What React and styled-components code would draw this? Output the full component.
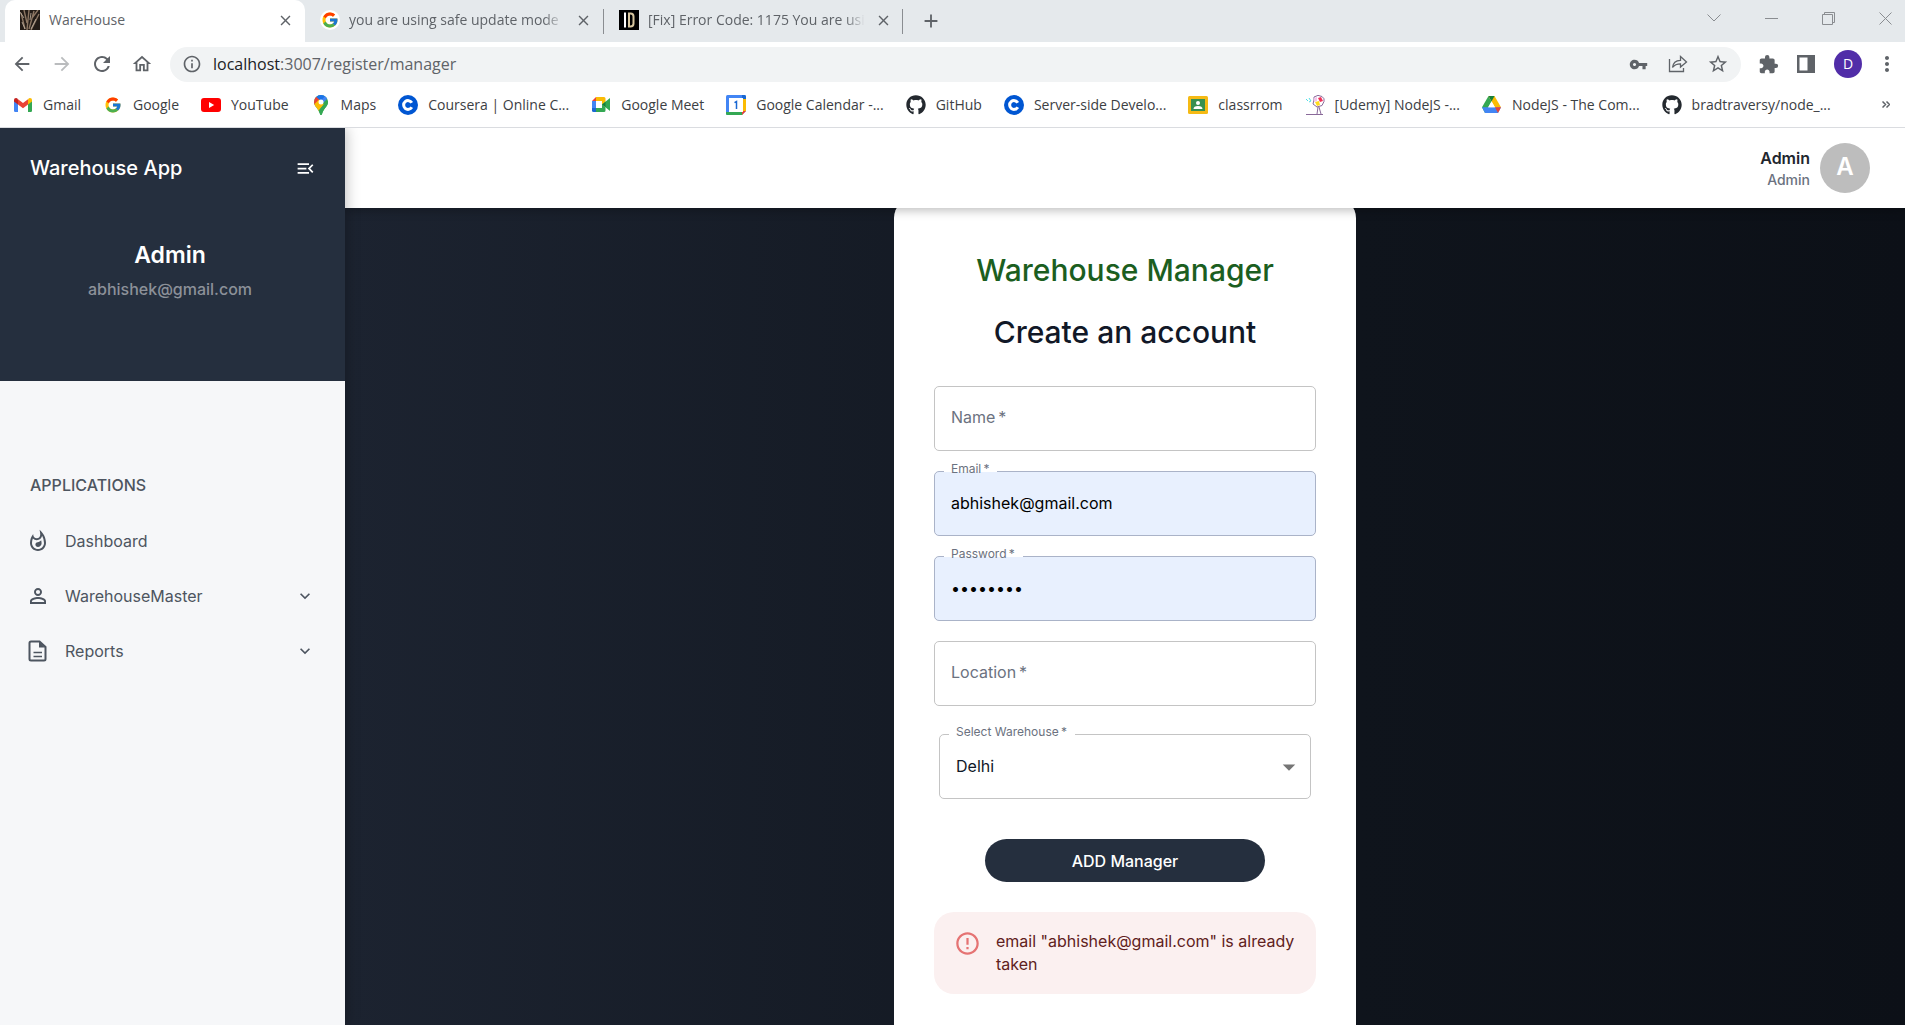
import React, { useState } from "react";
import styled, { createGlobalStyle } from "styled-components";
import {
  MdArrowBack, MdArrowForward, MdRefresh, MdOutlineHome, MdInfoOutline, MdVpnKey, MdStarBorder,
  MdExtension, MdMoreVert, MdClose, MdAdd, MdMenuOpen, MdOutlineWhatshot, MdPersonOutline,
  MdKeyboardArrowDown, MdErrorOutline, MdArrowDropDown,
} from "react-icons/md";
import { FaGithub } from "react-icons/fa";
import { FcGoogle } from "react-icons/fc";

const ui = '"Open Sans", "Noto Sans", sans-serif';
const app = 'Inter, Roboto, sans-serif';
const navy = "#252f3e";

const GlobalStyle = createGlobalStyle`
  *, *::before, *::after { box-sizing: border-box; }
  body { margin: 0; font-family: ${app}; background: #fff; }
  button, input, select { font: inherit; color: inherit; }
  button { border: 0; padding: 0; background: none; cursor: pointer; }
  a { color: inherit; text-decoration: none; }
  svg { display: block; flex: none; }
`;

const Page = styled.div`
  display: flex;
  flex-direction: column;
  height: 100vh;
  overflow: hidden;
`;

/* browser frame */
const TabStrip = styled.div`
  display: flex;
  align-items: stretch;
  height: 42px;
  flex: none;
  padding-left: 5px;
  background: #e5e9ec;
  font: 14px/20px ${ui};
  color: #5f6368;
`;
const Tab = styled.div`
  display: flex;
  align-items: center;
  gap: 9px;
  width: ${(p) => (p.$active ? 300 : 298)}px;
  padding: 0 10px 2px 15px;
  border-radius: 10px 10px 0 0;
  background: ${(p) => (p.$active ? "#fff" : "transparent")};
`;
const TabTitle = styled.span`
  flex: 1 0 0;
  white-space: nowrap;
  mask-image: ${(p) => (p.$fade ? "linear-gradient(to right, #000 calc(100% - 20px), transparent)" : "none")};
`;
const TabDivider = styled.span`
  align-self: center;
  width: 1px;
  height: 25px;
  background: #8a8d91;
`;
const IconButton = styled.button`
  display: flex;
  flex: none;
  align-items: center;
  justify-content: center;
  width: ${(p) => p.$w || 20}px;
  color: ${(p) => p.$color || "#5f6368"};
`;
const Favicon = styled.span`
  display: flex;
  flex: none;
  width: 20px;
  height: 20px;
  border-radius: ${(p) => (p.$round ? "50%" : "0")};
  align-items: center;
  justify-content: center;
  background: ${(p) => p.$bg || "transparent"};
`;
const WindowControls = styled.div`
  display: flex;
  gap: 37px;
  margin-left: auto;
  padding: 0 10px 6px 0;
`;
const Toolbar = styled.div`
  display: flex;
  align-items: center;
  height: 44px;
  flex: none;
  padding: 0 11px 0 12px;
  background: #fff;
`;
const NavButtons = styled.div`
  display: flex;
  gap: 20px;
  margin-right: 18px;
`;
const UrlBar = styled.div`
  display: flex;
  flex: 1;
  align-items: center;
  height: 35px;
  padding: 0 13px 0 12px;
  border-radius: 18px;
  background: #f1f3f4;
  font: 16px/24px ${ui};
  color: #5f6368;
`;
const UrlText = styled.span`
  flex: 1;
  margin-left: 11px;
  b { font-weight: 400; color: #202124; }
`;
const UrlActions = styled.div`
  display: flex;
  gap: 20px;
`;
const ToolActions = styled.div`
  display: flex;
  align-items: center;
  gap: 18px;
  margin-left: 17px;
`;
const Profile = styled.button`
  width: 28px;
  height: 28px;
  border-radius: 50%;
  background: #512da8;
  color: #fff;
  font: 14px/28px ${ui};
`;
const Bookmarks = styled.nav`
  display: flex;
  align-items: center;
  gap: 22px;
  height: 42px;
  flex: none;
  padding: 0 9px 4px 13px;
  border-bottom: 1px solid #dadce0;
  background: #fff;
  font: 14px/20px ${ui};
  color: #3c4043;
  > button { margin-left: auto; }
`;
const Bookmark = styled.a`
  display: flex;
  align-items: center;
  gap: 10px;
  white-space: nowrap;
`;

/* application */
const Shell = styled.div`
  display: flex;
  flex: 1;
  min-height: 0;
  overflow: hidden;
`;
const Sidebar = styled.aside`
  display: flex;
  flex-direction: column;
  width: 345px;
  flex: none;
  z-index: 3;
  background: #f6f7f9;
  box-shadow: 0 0 14px rgba(0, 0, 0, 0.3);
`;
const Brand = styled.div`
  height: 253px;
  background: ${navy};
  color: #fff;
`;
const BrandBar = styled.div`
  display: flex;
  align-items: center;
  justify-content: space-between;
  height: 80px;
  padding: 0 30px;
  font-size: 20px;
  font-weight: 500;
`;
const UserBlock = styled.div`
  padding: 32px 5px 0 0;
  text-align: center;
`;
const UserName = styled.div`
  font-size: 23px;
  line-height: 30px;
  font-weight: 600;
`;
const UserMail = styled.div`
  margin-top: 7px;
  font-size: 16px;
  line-height: 24px;
  font-weight: 500;
  color: #8c9199;
`;
const Menu = styled.nav`
  display: flex;
  flex-direction: column;
  padding: 89px 30px 0 26px;
  color: #4d5560;
`;
const MenuTitle = styled.h2`
  margin: 0 0 13px;
  padding-left: 4px;
  font-size: 16px;
  line-height: 30px;
  font-weight: 500;
`;
const MenuItem = styled.a`
  display: flex;
  align-items: center;
  height: 55px;
  font-size: 16px;
`;
const MenuLabel = styled.span`
  flex: 1;
  margin-left: 15px;
`;
const Content = styled.div`
  display: flex;
  flex-direction: column;
  flex: 1;
  min-width: 0;
`;
const Header = styled.header`
  display: flex;
  align-items: center;
  justify-content: flex-end;
  gap: 10px;
  height: 80px;
  flex: none;
  padding-right: 35px;
  z-index: 2;
  background: #fff;
  box-shadow: 0 2px 10px rgba(0, 0, 0, 0.28);
`;
const HeaderUser = styled.div`
  padding-top: 2px;
  text-align: right;
  font-size: 16px;
  line-height: 22px;
  font-weight: 600;
  color: #22262e;
  small {
    display: block;
    font-size: 14px;
    font-weight: 500;
    color: #6b7280;
  }
`;
const Avatar = styled.span`
  width: 50px;
  height: 50px;
  border-radius: 50%;
  background: #bdbdbd;
  color: #fff;
  font-size: 24px;
  line-height: 48px;
  font-weight: 600;
  text-align: center;
`;
const Main = styled.main`
  display: flex;
  flex: 1;
  min-height: 0;
  justify-content: center;
  background: linear-gradient(to right, #1c2330 0%, #0f141c 65%, #0c1017 100%);
`;
const Card = styled.form`
  display: flex;
  flex-direction: column;
  width: 462px;
  height: max-content;
  min-height: calc(100% + 40px);
  margin-top: -10px;
  padding: 52px 40px 40px;
  border-radius: 20px;
  background: #fff;
`;
const Title = styled.h1`
  margin: 0 0 22px;
  font-size: 30px;
  line-height: 40px;
  font-weight: 500;
  text-align: center;
  color: ${(p) => p.$color};
`;
const Fields = styled.div`
  display: flex;
  flex-direction: column;
  gap: 20px;
  margin-top: 12px;
`;
const FieldBox = styled.div`
  position: relative;
  margin: ${(p) => (p.$inset ? "8px 5px 0" : "0")};
  color: ${(p) => (p.$filled ? "#000" : "#111827")};
  input, select {
    display: block;
    width: 100%;
    height: 65px;
    padding: 0 16px 2px;
    border: 1px solid ${(p) => (p.$filled ? "#aab3c8" : "#c4c4c4")};
    border-radius: 5px;
    outline: 0;
    appearance: none;
    background: ${(p) => (p.$filled ? "#e8f0fe" : "#fff")};
    font-size: 16px;
  }
  svg {
    position: absolute;
    right: 7px;
    top: 18px;
    color: #757575;
    pointer-events: none;
  }
`;
const FieldLabel = styled.label`
  position: absolute;
  pointer-events: none;
  color: #6b7280;
  white-space: nowrap;
  ${(p) =>
    p.$raised
      ? `left: 10px; top: -10px; padding: 0 8px 0 7px; font-size: 12px; line-height: 16px;
         background: linear-gradient(#fff, #fff) 0 10px / 100% 1px no-repeat;`
      : "left: 17px; top: 19px; font-size: 16px; line-height: 24px;"}
`;
const Submit = styled.button`
  align-self: center;
  width: 280px;
  height: 43px;
  margin-top: 40px;
  border-radius: 22px;
  background: ${navy};
  color: #fff;
  font-size: 16px;
  font-weight: 500;
`;
const Alert = styled.div`
  display: flex;
  gap: 15px;
  margin-top: 30px;
  padding: 18px 20px;
  border-radius: 20px;
  background: #fbf0f0;
  color: #5f2120;
  font-size: 16px;
  line-height: 23px;
  svg { color: #e57373; }
`;

const Warehouse = () => (
  <svg width="20" height="20" viewBox="0 0 20 20">
    <rect width="20" height="20" fill="#241c17" />
    <path d="M1 3l4 16M4 0l3 13M9 0L7 20M14 1L9 19M19 4l-8 16M18 0l-6 8" stroke="#8c7663" strokeWidth="1.4" />
    <path d="M2 12l3 7M11 3l-1 7M16 9l-5 10M0 2l4 6" stroke="#c5b6a5" strokeWidth=".8" />
  </svg>
);
const IdLogo = () => (
  <svg width="20" height="20" viewBox="0 0 20 20">
    <rect width="20" height="20" fill="#000" />
    <path d="M6 2.500v15" stroke="#fff" strokeWidth="2" />
    <path d="M10 3.500h1.500q3 0 3 3v7q0 3-3 3H10z" fill="none" stroke="#d8c7a0" strokeWidth="2" />
  </svg>
);
const GmailLogo = () => (
  <svg width="18" height="14" viewBox="0 0 18 14">
    <path d="M0 2v10.800Q0 14 1.200 14H4V5z" fill="#4285f4" />
    <path d="M18 2v10.800q0 1.200-1.200 1.200H14V5z" fill="#34a853" />
    <path d="M14 1.200V6.500l4-3V2q0-2-2-2-1 0-2 1.200z" fill="#fbbc04" />
    <path d="M4 6.500V1.200L9 5l5-3.800v5.300L9 10.300z" fill="#ea4335" />
    <path d="M0 2v1.500l4 3V1.200Q3 0 2 0 0 0 0 2z" fill="#c5221f" />
  </svg>
);
const YoutubeLogo = () => (
  <svg width="20" height="14" viewBox="0 0 20 14">
    <rect width="20" height="14" rx="3" fill="#f00" />
    <path d="M8 4l5.200 3L8 10z" fill="#fff" />
  </svg>
);
const MapsLogo = () => (
  <svg width="14" height="20" viewBox="0 0 14 20">
    <clipPath id="pin"><path d="M7 0a7 7 0 0 1 7 7c0 4.500-4.500 6.500-5.800 11.500Q7.800 20 7 20t-1.200-1.500C4.500 13.500 0 11.500 0 7a7 7 0 0 1 7-7z" /></clipPath>
    <g clipPath="url(#pin)">
      <rect width="14" height="20" fill="#34a853" />
      <path d="M4 0h10v3L8 9z" fill="#4285f4" />
      <path d="M5 -1L1 2l5 5 5-6z" fill="#1a73e8" />
      <path d="M-1 4L2 1.500 6.500 6 1 12z" fill="#ea4335" />
      <path d="M0 9.500l5-5 5 5-6 7-4-4z" fill="#fbbc04" />
      <path d="M10 9l-6 7.500L7 21l8-9V4z" fill="#34a853" />
    </g>
    <circle cx="7" cy="7" r="2.500" fill="#fff" />
  </svg>
);
const CourseraLogo = () => (
  <svg width="20" height="20" viewBox="0 0 20 20">
    <circle cx="10" cy="10" r="10" fill="#0056d2" />
    <path d="M13.800 7.700A4.400 4.400 0 1 0 13.800 12.300" fill="none" stroke="#fff" strokeWidth="3" />
  </svg>
);
const MeetLogo = () => (
  <svg width="18" height="15" viewBox="0 0 18 15">
    <path d="M4 0h8q1.500 0 1.500 1.500V5L10 7.500V4H4z" fill="#fbbc04" />
    <path d="M4 0v4H0z" fill="#ea4335" />
    <path d="M0 4h4v7H0z" fill="#4285f4" />
    <path d="M0 11h4v4H1.500Q0 15 0 13.500z" fill="#1967d2" />
    <path d="M4 11h6V7.500l3.500 3v3q0 1.500-1.500 1.500H4z" fill="#34a853" />
    <path d="M10 7.500L18 1v13z" fill="#34a853" />
    <path d="M10 7.500L13.500 4.700v5.600z" fill="#188038" />
  </svg>
);
const CalendarLogo = () => (
  <svg width="20" height="20" viewBox="0 0 20 20">
    <rect width="20" height="20" rx="1.500" fill="#4285f4" />
    <path d="M16 0h2.500Q20 0 20 1.500V4h-4z" fill="#1967d2" />
    <path d="M17 4h3v12h-3z" fill="#fbbc04" />
    <path d="M0 17h17v3H1.500Q0 20 0 18.500z" fill="#34a853" />
    <path d="M20 16v4h-4z" fill="#fff" />
    <path d="M16 16h4l-4 4z" fill="#ea4335" />
    <path d="M3 3h14v14H3z" fill="#fff" />
    <path d="M8.500 7.700l2-1.200v7.500" fill="none" stroke="#1967d2" strokeWidth="1.500" />
  </svg>
);
const ClassroomLogo = () => (
  <svg width="20" height="18" viewBox="0 0 20 18">
    <rect width="20" height="18" rx="1.500" fill="#f5ba14" />
    <rect x="3" y="3" width="14" height="12" fill="#389050" />
    <circle cx="10" cy="7" r="2" fill="#fff" />
    <path d="M5.500 13q0-3 4.500-3t4.500 3z" fill="#fff" />
  </svg>
);
const SketchLogo = () => (
  <svg width="20" height="20" viewBox="0 0 20 20" fill="none" stroke="#8a6a9a">
    <path d="M9 2q4-3 8-.5 3 2 2 5l-2 4-5 1.500L8 9l1-4z" />
    <path d="M13 3l3-1 2 4-3 1z" fill="#f0325a" stroke="none" />
    <path d="M10 7l4-1 1 4-3 1z" fill="#ffdc1e" stroke="none" />
    <path d="M9 3l3-1v4l-3 1z" fill="#f3c6ea" stroke="none" />
    <path d="M1 4l2 2M4 3l2 3M4 7l2-1" stroke="#4fe0e6" />
    <path d="M13 12l-1 7M14 12l2 7M1 19.500h17" />
  </svg>
);
const DriveLogo = () => (
  <svg width="19" height="17" viewBox="0 0 19 17">
    <path d="M6.500 0L0 11.300 3 17l6.500-11.500z" fill="#34a853" />
    <path d="M6.500 0h6L19 11.300h-6z" fill="#fbbc04" />
    <path d="M0 11.300h19L16 17H3z" fill="#4285f4" />
    <path d="M13 11.300h6L16 17z" fill="#ea4335" />
    <path d="M6.500 0h6l-3 5.500z" fill="#188038" />
    <path d="M9.500 5.500l3.300 5.800H6.200z" fill="#fff" />
  </svg>
);
const ShareIcon = () => (
  <svg width="20" height="20" viewBox="0 0 20 20" fill="none" stroke="#5f6368" strokeWidth="1.300">
    <path d="M1.500 5v12.500h14V14" />
    <path d="M4.500 13.500c.5-5 3.500-7 8-7.200V2.500l6 5.500-6 5V9.800c-3.500 0-6 .8-8 3.700z" />
  </svg>
);
const PanelIcon = () => (
  <svg width="18" height="18" viewBox="0 0 18 18">
    <path d="M0 0h18v18H0zM2.500 2.500v13h8v-13z" fill="#5f6368" fillRule="evenodd" />
  </svg>
);
const ReportIcon = () => (
  <svg width="24" height="24" viewBox="0 0 24 24" fill="none" stroke="currentColor" strokeWidth="2">
    <path d="M13.500 2.500H5q-1.500 0-1.500 1.500v16q0 1.500 1.500 1.500h13q1.500 0 1.500-1.500V8z" />
    <path d="M13 2.500V8.500h6z" fill="currentColor" stroke="none" />
    <path d="M7.500 13.500h8.500M7.500 17.500h8.500" strokeWidth="1.500" />
  </svg>
);

const bookmarks = [
  ["Gmail", GmailLogo],
  ["Google", () => <FcGoogle size={18} />],
  ["YouTube", YoutubeLogo],
  ["Maps", MapsLogo],
  ["Coursera | Online C...", CourseraLogo],
  ["Google Meet", MeetLogo],
  ["Google Calendar -...", CalendarLogo],
  ["GitHub", () => <FaGithub size={20} color="#24292f" />],
  ["Server-side Develo...", CourseraLogo],
  ["classrrom", ClassroomLogo],
  ["[Udemy] NodeJS -...", SketchLogo],
  ["NodeJS - The Com...", DriveLogo],
  ["bradtraversy/node_...", () => <FaGithub size={20} color="#24292f" />],
];

function BrowserTab({ icon, title, active }) {
  return (
    <Tab $active={active}>
      {icon}
      <TabTitle $fade={!active}>{title}</TabTitle>
      <IconButton aria-label="Close tab"><MdClose size={17} /></IconButton>
    </Tab>
  );
}

function Field({ id, label, type = "text", initial = "" }) {
  const [value, setValue] = useState(initial);
  return (
    <FieldBox $filled={!!value}>
      <input id={id} type={type} value={value} onChange={(e) => setValue(e.target.value)} />
      <FieldLabel htmlFor={id} $raised={!!value}>{label}&thinsp;*</FieldLabel>
    </FieldBox>
  );
}

export default function App() {
  return (
    <Page>
      <GlobalStyle />
      <TabStrip>
        <BrowserTab active icon={<Warehouse />} title="WareHouse" />
        <BrowserTab icon={<Favicon $round $bg="#fff"><FcGoogle size={18} /></Favicon>} title="you are using safe update mode" />
        <TabDivider />
        <BrowserTab icon={<IdLogo />} title="[Fix] Error Code: 1175 You are usi" />
        <TabDivider />
        <IconButton $w={56} aria-label="New tab"><MdAdd size={22} /></IconButton>
        <WindowControls>
          <IconButton $color="#8a8d91" aria-label="Search tabs">
            <svg width="14" height="8" viewBox="0 0 14 8" fill="none" stroke="currentColor"><path d="M.5.5L7 7 13.500.5" /></svg>
          </IconButton>
          <IconButton $color="#8a8d91" aria-label="Minimise">
            <svg width="13" height="1"><rect width="13" height="1" fill="currentColor" /></svg>
          </IconButton>
          <IconButton $color="#8a8d91" aria-label="Restore">
            <svg width="13" height="13" viewBox="0 0 13 13" fill="none" stroke="currentColor"><path d="M.5 2.500h10v10H.5zM2.500 2.500v-2h10v10h-2" /></svg>
          </IconButton>
          <IconButton $color="#8a8d91" aria-label="Close window">
            <svg width="13" height="13" viewBox="0 0 13 13" stroke="currentColor"><path d="M.5.5l12 12M12.500.5l-12 12" /></svg>
          </IconButton>
        </WindowControls>
      </TabStrip>
      <Toolbar>
        <NavButtons>
          <IconButton aria-label="Back"><MdArrowBack size={22} /></IconButton>
          <IconButton $color="#babcbe" aria-label="Forward"><MdArrowForward size={22} /></IconButton>
          <IconButton aria-label="Reload"><MdRefresh size={24} /></IconButton>
          <IconButton aria-label="Home"><MdOutlineHome size={22} /></IconButton>
        </NavButtons>
        <UrlBar>
          <MdInfoOutline size={20} />
          <UrlText><b>localhost</b>:3007/register/manager</UrlText>
          <UrlActions>
            <IconButton aria-label="Passwords"><MdVpnKey size={19} /></IconButton>
            <IconButton aria-label="Share"><ShareIcon /></IconButton>
            <IconButton aria-label="Bookmark"><MdStarBorder size={22} /></IconButton>
          </UrlActions>
        </UrlBar>
        <ToolActions>
          <IconButton aria-label="Extensions"><MdExtension size={21} /></IconButton>
          <IconButton aria-label="Side panel"><PanelIcon /></IconButton>
          <Profile>D</Profile>
          <IconButton $w={14} aria-label="Menu"><MdMoreVert size={24} /></IconButton>
        </ToolActions>
      </Toolbar>
      <Bookmarks>
        {bookmarks.map(([name, Icon]) => (
          <Bookmark href="#" key={name}><Favicon><Icon /></Favicon>{name}</Bookmark>
        ))}
        <IconButton aria-label="More bookmarks">
          <svg width="8" height="7" viewBox="0 0 8 7" fill="none" stroke="currentColor" strokeWidth="1.500"><path d="M.5.5l3 3-3 3M4.500.5l3 3-3 3" /></svg>
        </IconButton>
      </Bookmarks>
      <Shell>
        <Sidebar>
          <Brand>
            <BrandBar>
              Warehouse App
              <IconButton $color="#fff" aria-label="Collapse menu"><MdMenuOpen size={21} /></IconButton>
            </BrandBar>
            <UserBlock>
              <UserName>Admin</UserName>
              <UserMail>abhishek@gmail.com</UserMail>
            </UserBlock>
          </Brand>
          <Menu>
            <MenuTitle>APPLICATIONS</MenuTitle>
            <MenuItem href="#"><MdOutlineWhatshot size={24} /><MenuLabel>Dashboard</MenuLabel></MenuItem>
            <MenuItem href="#"><MdPersonOutline size={24} /><MenuLabel>WarehouseMaster</MenuLabel><MdKeyboardArrowDown size={20} /></MenuItem>
            <MenuItem href="#"><ReportIcon /><MenuLabel>Reports</MenuLabel><MdKeyboardArrowDown size={20} /></MenuItem>
          </Menu>
        </Sidebar>
        <Content>
          <Header>
            <HeaderUser>Admin<small>Admin</small></HeaderUser>
            <Avatar>A</Avatar>
          </Header>
          <Main>
            <Card onSubmit={(e) => e.preventDefault()}>
              <Title $color="#1b5e20">Warehouse Manager</Title>
              <Title $color="#111827">Create an account</Title>
              <Fields>
                <Field id="name" label="Name" />
                <Field id="email" label="Email" initial="abhishek@gmail.com" />
                <Field id="password" label="Password" type="password" initial="12345678" />
                <Field id="location" label="Location" />
                <FieldBox $inset>
                  <select id="warehouse" defaultValue="Delhi"><option>Delhi</option></select>
                  <FieldLabel htmlFor="warehouse" $raised>Select Warehouse&thinsp;*</FieldLabel>
                  <MdArrowDropDown size={30} />
                </FieldBox>
              </Fields>
              <Submit type="submit">ADD Manager</Submit>
              <Alert role="alert">
                <MdErrorOutline size={27} />
                <span>email "abhishek@gmail.com" is already taken</span>
              </Alert>
            </Card>
          </Main>
        </Content>
      </Shell>
    </Page>
  );
}
